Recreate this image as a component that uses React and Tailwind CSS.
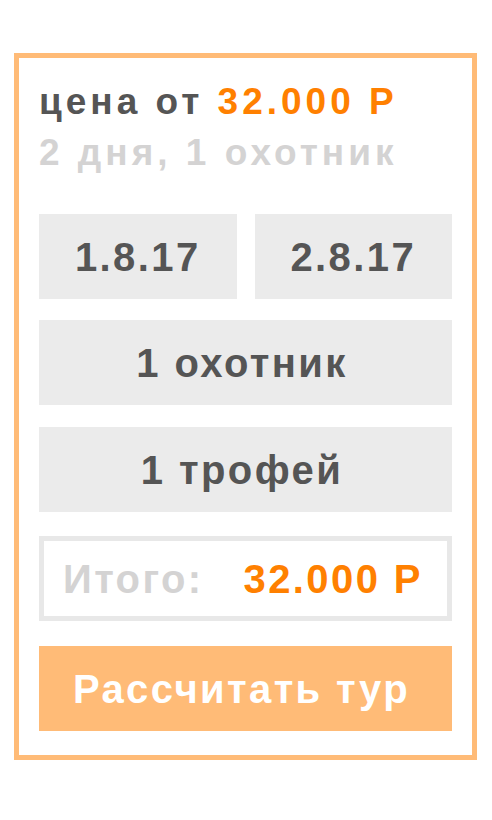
import React from 'react';

const box = 'h-[85px] flex items-center justify-center bg-[#ebebeb] text-[#555555] text-[40px] font-bold tracking-[2.4px]';

function App() {
  return (
    <div className="min-h-[820px] bg-white font-['Liberation_Sans',Arial,sans-serif]">
      <div className="pt-[53px] pl-[14px]">
        <div className="w-[463px] border-[5px] border-[#ffbb77] px-5 pt-[18px] pb-6">
          {/* Price header */}
          <div className="text-[37px] font-bold leading-[51px] tracking-[4px]">
            <div className="text-[#555555]">
              цена от <span className="text-[#ff8000]">32.000 Р</span>
            </div>
            <div className="text-[#d4d3d3]">2 дня, 1 охотник</div>
          </div>

          {/* Dates */}
          <div className="mt-[36px] grid grid-cols-2 gap-[18px]">
            <div className={box}>1.8.17</div>
            <div className={box}>2.8.17</div>
          </div>

          <div className={'mt-[21px] pr-[7px] ' + box}>1 охотник</div>
          <div className={'mt-[22px] pr-[7px] ' + box}>1 трофей</div>

          {/* Total */}
          <div className="mt-[24px] h-[85px] border-[5px] border-[#e8e8e8] flex items-center pl-[19px] text-[40px] font-bold tracking-[2.4px]">
            <span className="text-[#d4d3d3]">Итого:</span>
            <span className="ml-[40px] text-[#ff8000]">32.000 Р</span>
          </div>

          <button className="mt-[25px] w-full h-[85px] flex items-center justify-center bg-[#ffbb77] text-white text-[40px] font-bold tracking-[2.4px] pr-2">
            Рассчитать тур
          </button>
        </div>
      </div>
    </div>
  );
}

export default App;
